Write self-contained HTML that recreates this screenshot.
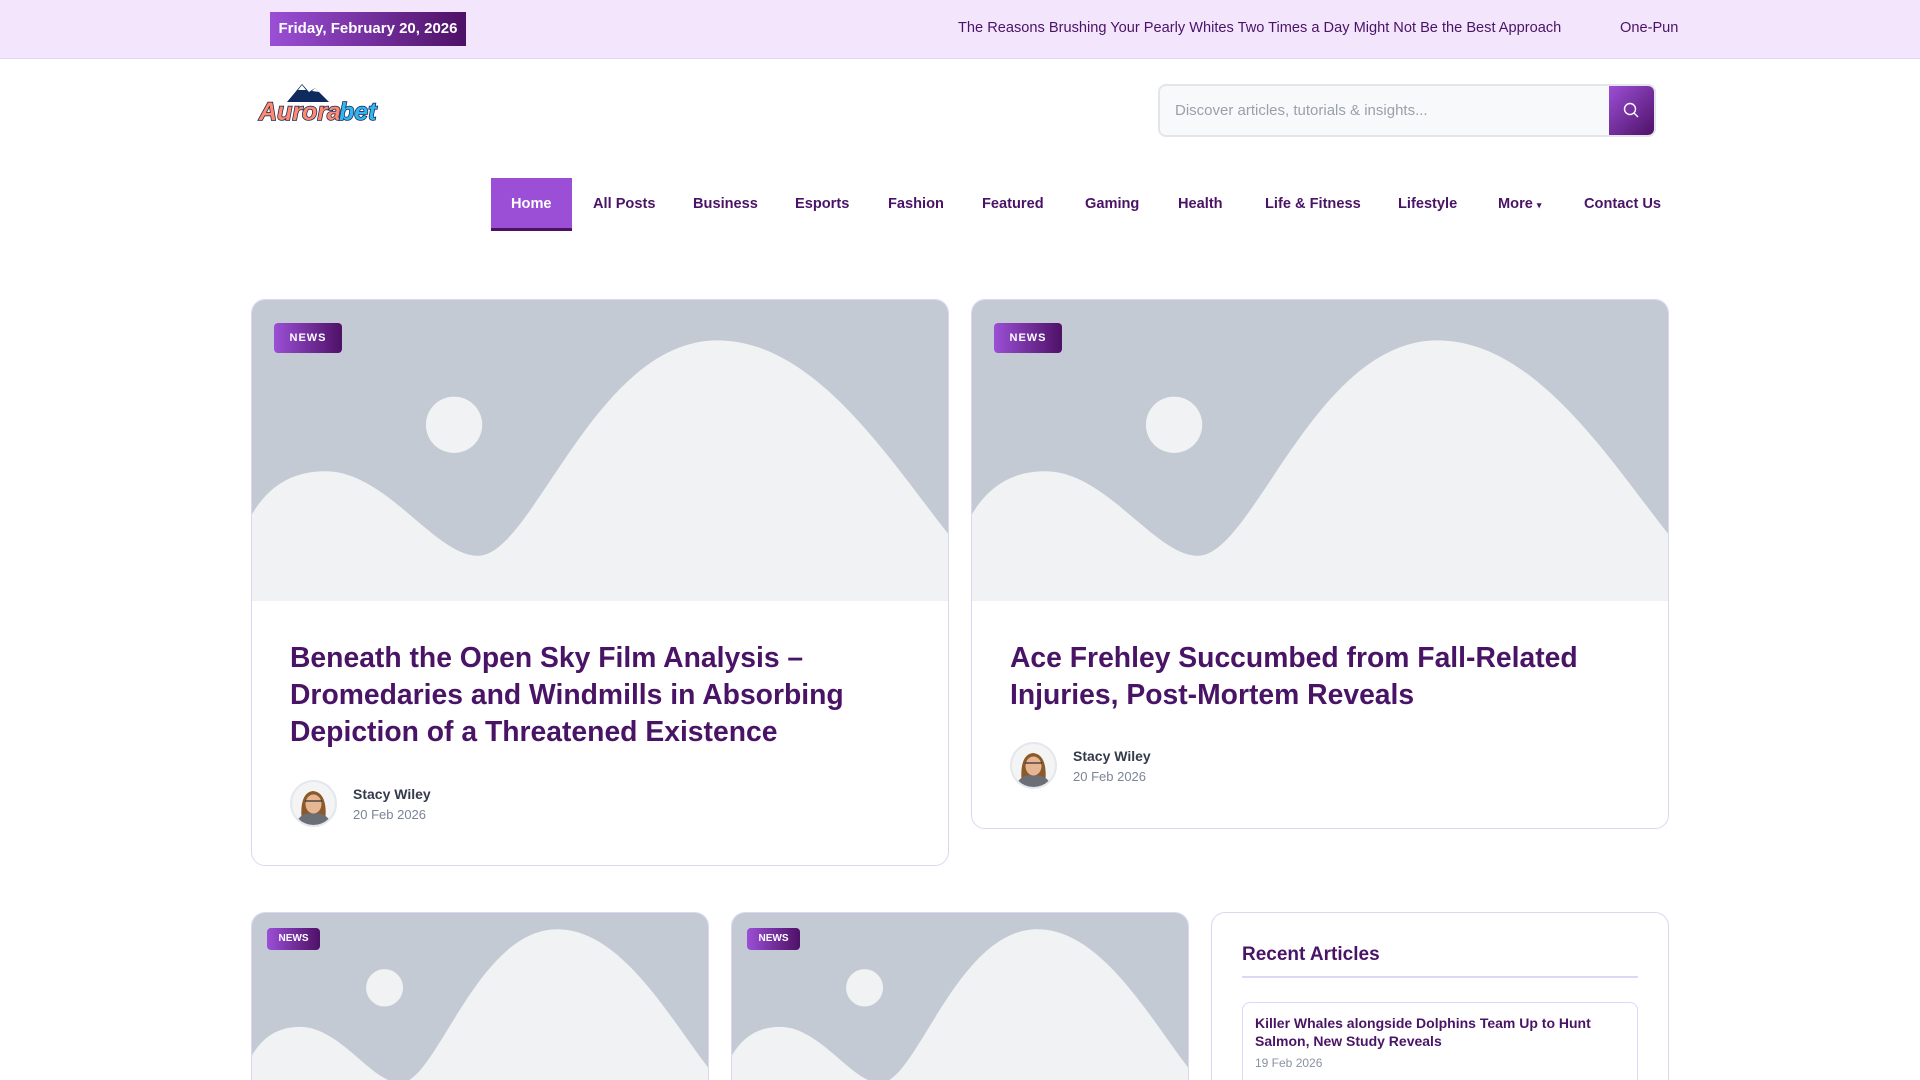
<!DOCTYPE html>
<html style="width:1920px;height:1080px;overflow:hidden"><head><meta charset="utf-8"><style>
*{margin:0;padding:0;box-sizing:border-box}
body{width:1920px;height:1080px;overflow:hidden;background:#fff;font-family:"Liberation Sans",sans-serif;position:relative;color:#4a1466}
.abs{position:absolute}
.top{left:0;top:0;width:1920px;height:59px;background:#f3e5fc;border-bottom:1px solid #e2d8f5}
.date{left:270px;top:12px;width:196px;height:34px;background:linear-gradient(90deg,#9b4fd6,#4e1166);color:#fff;font-weight:bold;font-size:15px;line-height:34px;text-align:center}
.tick{top:20px;font-size:14.6px;color:#4a1466;white-space:nowrap}
.search{left:1158px;top:84px;width:498px;height:53px;border:2px solid #e3e5ea;border-radius:8px;background:#f8f9fb;overflow:hidden}
.search span{position:absolute;left:15px;top:16px;font-size:15px;color:#9aa0ab}
.search b{position:absolute;right:0;top:0;width:45px;height:49px;background:linear-gradient(135deg,#9b4fd6,#4e1166)}
.nav a{position:absolute;top:178px;height:53px;line-height:53px;font-size:14.6px;font-weight:bold;color:#4a1466;text-decoration:none;white-space:nowrap}
.card{border:1px solid #ddd6f3;border-radius:14px;overflow:hidden;background:#fff}
.card svg{display:block}
.badge{position:absolute;background:linear-gradient(90deg,#9b4fd6,#4e1166);color:#fff;font-weight:bold;border-radius:4px;text-align:center;letter-spacing:1px}
h2{position:absolute;font-size:28.3px;line-height:37px;font-weight:bold;color:#4a1466}
.av{position:absolute;width:47px;height:47px;border-radius:50%;border:2px solid #e3e7ee;background:#f4f4f4;overflow:hidden}
.nm{position:absolute;font-size:14px;font-weight:bold;color:#333a4a}
.dt{position:absolute;font-size:13px;color:#7b8496}
.b2{border-bottom:none;border-radius:14px 14px 0 0}
</style></head><body>
<div class="abs top"></div>
<div class="abs date">Friday, February 20, 2026</div>
<div class="abs tick" style="left:958px">The Reasons Brushing Your Pearly Whites Two Times a Day Might Not Be the Best Approach</div>
<div class="abs tick" style="left:1620px">One-Pun</div>

<svg class="abs" style="left:257px;top:80px" width="125" height="45" viewBox="0 0 125 45">
<path d="M30 22 L45 4 L52 12 L58 8 L72 22 Z" fill="#0f2a5c"/>
<path d="M41 10 L45 5 L49 10 Z M55 11 L58 8 L62 12 Z" fill="#fff"/>
<text x="2" y="40" font-family="Liberation Sans" font-weight="bold" font-style="italic" font-size="25" fill="#ff8a70" stroke="#10224f" stroke-width="1.5" paint-order="stroke">Aurora</text>
<text x="82" y="40" font-family="Liberation Sans" font-weight="bold" font-style="italic" font-size="25" fill="#33b6f0" stroke="#10224f" stroke-width="1.5" paint-order="stroke">bet</text>
</svg>

<div class="abs search"><span>Discover articles, tutorials &amp; insights...</span><b><svg width="45" height="49" viewBox="0 0 45 49"><circle cx="21" cy="23" r="5.5" fill="none" stroke="#fff" stroke-width="1.4"/><path d="M25 27 L29 31" stroke="#fff" stroke-width="1.4"/></svg></b></div>

<div class="nav">
<div class="abs" style="left:491px;top:178px;width:81px;height:53px;background:#9b4fd6;border-bottom:3px solid #4e1166"></div>
<a style="left:511px;color:#fff">Home</a>
<a style="left:593px">All Posts</a>
<a style="left:693px">Business</a>
<a style="left:795px">Esports</a>
<a style="left:888px">Fashion</a>
<a style="left:982px">Featured</a>
<a style="left:1085px">Gaming</a>
<a style="left:1178px">Health</a>
<a style="left:1265px">Life &amp; Fitness</a>
<a style="left:1398px">Lifestyle</a>
<a style="left:1498px">More <span style="font-size:9px">▾</span></a>
<a style="left:1584px">Contact Us</a>
</div>

<div class="abs card" style="left:251px;top:299px;width:698px;height:567px">
<svg width="698" height="301" viewBox="0 0 570 246" preserveAspectRatio="none"><rect width="570" height="246" fill="#c3cad3"/><circle cx="165" cy="102" r="23" fill="#f1f2f4"/><path d="M0,246 L0,175 C15,150 35,140 60,140 C110,140 150,210 185,209 C230,208 280,33 380,33 C460,33 520,130 570,193 L570,246 Z" fill="#f1f2f4"/></svg>
</div>
<div class="abs card" style="left:971px;top:299px;width:698px;height:530px">
<svg width="698" height="301" viewBox="0 0 570 246" preserveAspectRatio="none"><rect width="570" height="246" fill="#c3cad3"/><circle cx="165" cy="102" r="23" fill="#f1f2f4"/><path d="M0,246 L0,175 C15,150 35,140 60,140 C110,140 150,210 185,209 C230,208 280,33 380,33 C460,33 520,130 570,193 L570,246 Z" fill="#f1f2f4"/></svg>
</div>
<div class="badge" style="left:274px;top:323px;width:68px;height:30px;line-height:30px;font-size:11px">NEWS</div>
<div class="badge" style="left:994px;top:323px;width:68px;height:30px;line-height:30px;font-size:11px">NEWS</div>
<h2 style="left:290px;top:639px;width:600px">Beneath the Open Sky Film Analysis – Dromedaries and Windmills in Absorbing Depiction of a Threatened Existence</h2>
<h2 style="left:1010px;top:639px;width:600px">Ace Frehley Succumbed from Fall-Related Injuries, Post-Mortem Reveals</h2>

<div class="av" style="left:290px;top:780px"><svg width="43" height="43" viewBox="0 0 43 43"><path d="M10 40 C8 25 10 10 21 9 C33 10 35 25 33 40 Z" fill="#8a5a2a"/><path d="M4 43 C6 33 14 31 21 31 C29 31 37 33 39 43 Z" fill="#6b6f75"/><ellipse cx="21.5" cy="22" rx="8" ry="9.5" fill="#e8b593"/><path d="M13 19 L30 19" stroke="#333" stroke-width="1.2"/></svg></div>
<div class="nm" style="left:353px;top:786px">Stacy Wiley</div>
<div class="dt" style="left:353px;top:807px">20 Feb 2026</div>
<div class="av" style="left:1010px;top:742px"><svg width="43" height="43" viewBox="0 0 43 43"><path d="M10 40 C8 25 10 10 21 9 C33 10 35 25 33 40 Z" fill="#8a5a2a"/><path d="M4 43 C6 33 14 31 21 31 C29 31 37 33 39 43 Z" fill="#6b6f75"/><ellipse cx="21.5" cy="22" rx="8" ry="9.5" fill="#e8b593"/><path d="M13 19 L30 19" stroke="#333" stroke-width="1.2"/></svg></div>
<div class="nm" style="left:1073px;top:748px">Stacy Wiley</div>
<div class="dt" style="left:1073px;top:769px">20 Feb 2026</div>

<div class="abs card b2" style="left:251px;top:912px;width:458px;height:168px">
<svg width="458" height="200" viewBox="0 0 570 246" preserveAspectRatio="none"><rect width="570" height="246" fill="#c3cad3"/><circle cx="165" cy="92" r="23" fill="#f1f2f4"/><path d="M0,246 L0,175 C15,150 35,140 60,140 C110,140 150,210 185,209 C230,208 280,20 380,20 C460,20 520,130 570,193 L570,246 Z" fill="#f1f2f4"/></svg>
</div>
<div class="abs card b2" style="left:731px;top:912px;width:458px;height:168px">
<svg width="458" height="200" viewBox="0 0 570 246" preserveAspectRatio="none"><rect width="570" height="246" fill="#c3cad3"/><circle cx="165" cy="92" r="23" fill="#f1f2f4"/><path d="M0,246 L0,175 C15,150 35,140 60,140 C110,140 150,210 185,209 C230,208 280,20 380,20 C460,20 520,130 570,193 L570,246 Z" fill="#f1f2f4"/></svg>
</div>
<div class="badge" style="left:267px;top:928px;width:53px;height:22px;line-height:22px;font-size:10px;letter-spacing:0">NEWS</div>
<div class="badge" style="left:747px;top:928px;width:53px;height:22px;line-height:22px;font-size:10px;letter-spacing:0">NEWS</div>

<div class="abs card b2" style="left:1211px;top:912px;width:458px;height:168px"></div>
<div class="abs" style="left:1242px;top:944px;font-size:19px;font-weight:bold">Recent Articles</div>
<div class="abs" style="left:1242px;top:976px;width:396px;height:2px;background:#ddd6f8"></div>
<div class="abs" style="left:1242px;top:1002px;width:396px;height:78px;border:1px solid #ddd6f8;border-bottom:none;border-radius:8px 8px 0 0"></div>
<div class="abs" style="left:1255px;top:1014px;width:370px;font-size:14px;line-height:18px;font-weight:bold">Killer Whales alongside Dolphins Team Up to Hunt Salmon, New Study Reveals</div>
<div class="abs" style="left:1255px;top:1056px;font-size:12px;color:#8a93a3">19 Feb 2026</div>
</body></html>
